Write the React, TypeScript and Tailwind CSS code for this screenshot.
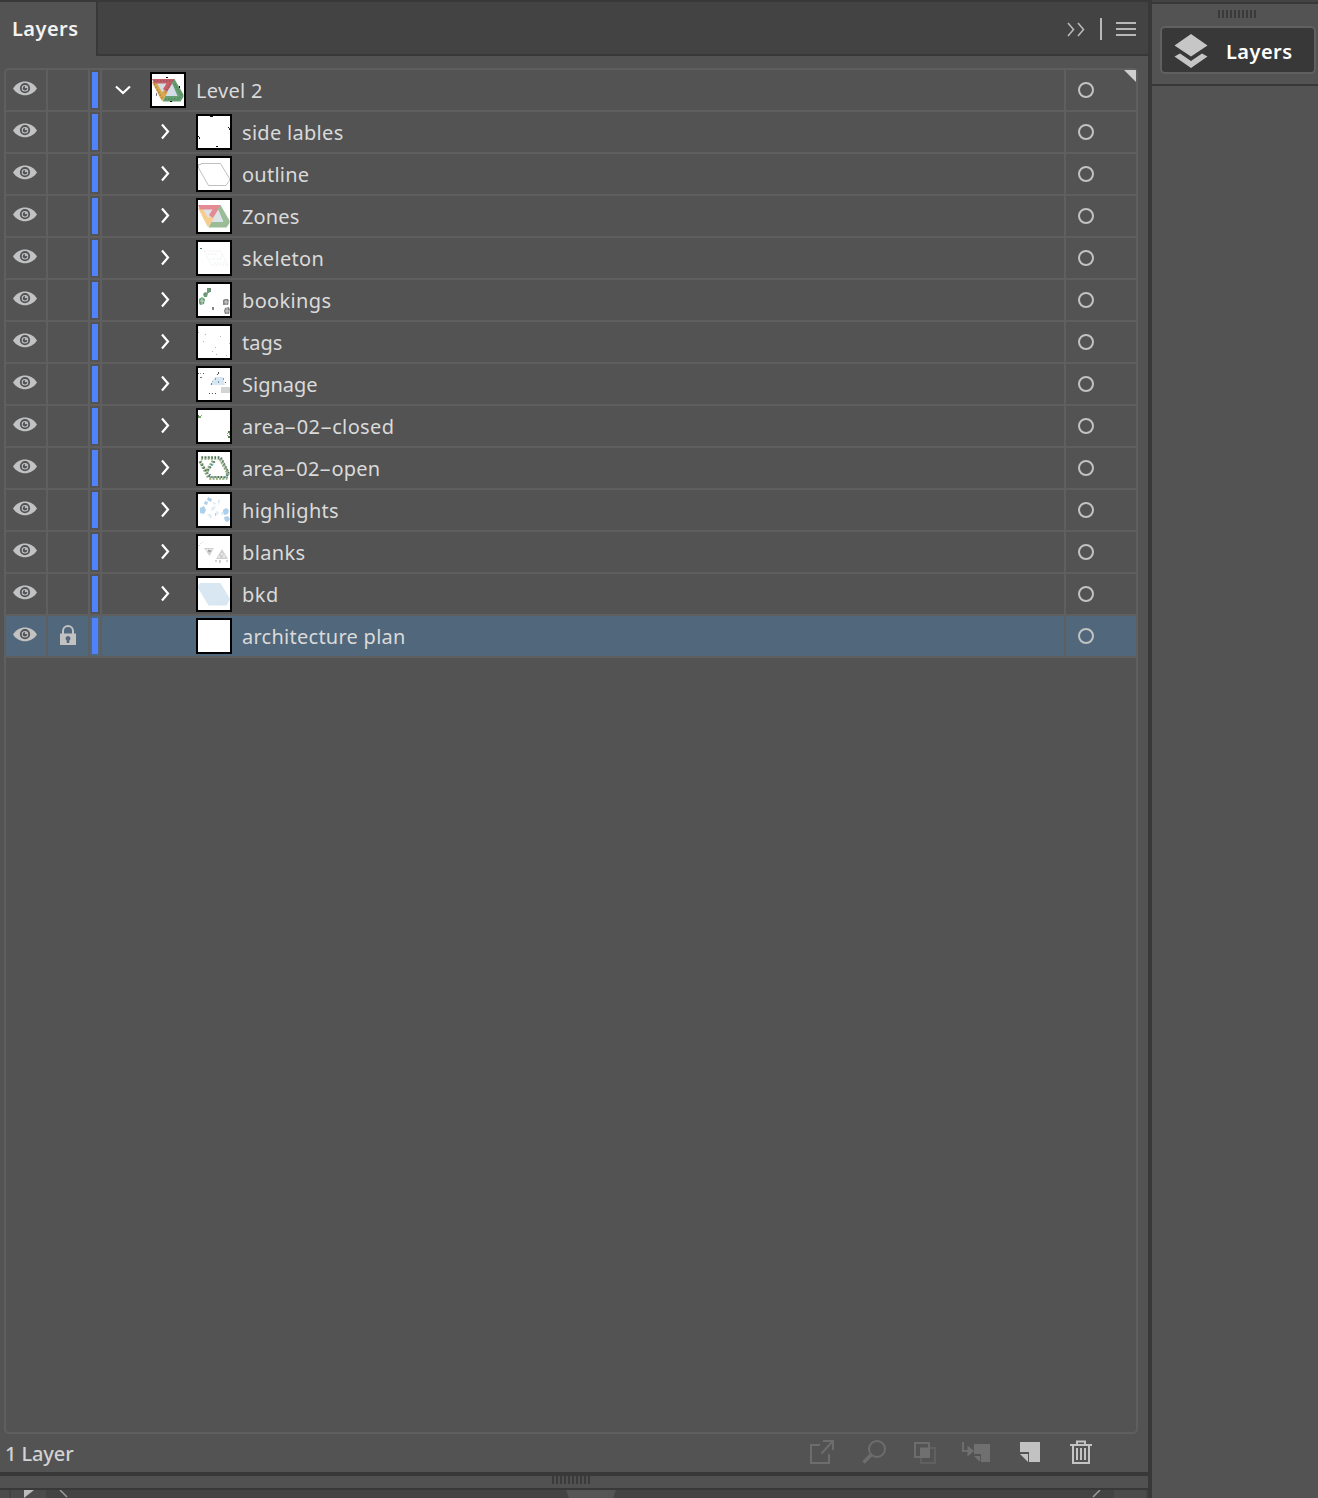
import type { ReactNode } from "react";

function Grip() {
  return (
    <svg width="38" height="8" className="block" fill="#3a3a3a" shapeRendering="crispEdges">
      {Array.from({ length: 10 }, (_, i) => (
        <rect key={i} x={i * 4} y="0" width="2" height="8" />
      ))}
    </svg>
  );
}

/* Small speckles used by the artwork previews: [x, y, w, h, colour] */
type Dot = [number, number, number, number, string];
function Dots({ items }: { items: Dot[] }) {
  return (
    <>
      {items.map(([x, y, w, h, c], i) => (
        <rect key={i} x={x} y={y} width={w} height={h} fill={c} />
      ))}
    </>
  );
}

/* The four coloured zones of the floor plan */
function Zones({ red, orange, green, grey }: { red: string; orange: string; green: string; grey: string }) {
  return (
    <>
      <path d="M4 8H21L27 23H12L9 18Z" fill={grey} />
      <path d="M0 8H4.500L10 18 12.500 16 15.500 18.500 11 26.500H9.500Z" fill={orange} />
      <path d="M0 5H23L15 18 11 15 14.500 9.500H2Z" fill={red} />
      <path d="M22.500 5 31.500 20.500V23L28.500 27.500H10.500L13.500 22H25.500L20 9Z" fill={green} />
    </>
  );
}

const n = "#b4b4b4";

const art: Record<string, ReactNode> = {
  level: (
    <>
      <Zones red="#c85f68" orange="#dba84f" green="#65a072" grey="#d3dde6" />
      <path d="M2 7H22M2 10 10 24M13 25H27L29 21 22 9M13 19 19 9" fill="none" stroke="#4b4b3c" strokeOpacity=".3" strokeWidth="2" strokeDasharray="1.500 1.500" />
      <Dots items={[[14, 3, 2, 1, "#111"], [27, 12, 1, 2, "#111"], [4, 19, 1, 3, "#777"], [18, 27, 2, 1, "#111"]]} />
    </>
  ),
  side: <Dots items={[[12, 0, 3, 1, "#111"], [30, 11, 1, 1, "#111"], [31, 12, 1, 2, "#333"], [0, 20, 1, 1, "#111"], [1, 21, 1, 2, "#333"], [18, 30, 2, 1, "#111"]]} />,
  outline: <path d="M0.500 6.500H3V5.500H22.500L31.500 20.500V22.500L28 27.500H10.500L0.500 10Z" fill="none" stroke="#c0c0c0" />,
  zones: <Zones red="#e38a94" orange="#f6cd8e" green="#9abd98" grey="#dce3e7" />,
  skeleton: (
    <>
      <Dots items={[[2, 6, 2, 1, "#34857e"]]} />
      <path d="M6 9H22L30 23H13ZM10 12H20M12 17H23M16 21H27M25 12 22 18" fill="none" stroke="#edf2f1" strokeDasharray="2 1" />
    </>
  ),
  bookings: (
    <>
      <path d="M9 4h3l1 2-2 3h-2zM5 10l2-2 3 1-1 4H6zM1 15l3-2 3 2-1 5-4 1-1-2zM27 15h3v2h-3zM27 24h4v2h-4zM25 19h2v2h-2z" fill="#67a174" />
      <path d="M11 4h2v4h-2zM7 9h2v2H7zM2 17h2v2H2zM25 16l2-1h3l1 2-1 4h-4l-1-2zM27 24l4-1 1 3-1 4h-4l-1-3zM14 23h2v3h-2z" fill="#858585" />
      <path d="M28 16v5M26 18h5M29 24v6M27 27h5M4 14v6M2 17h4" stroke="#dfeae1" strokeWidth=".7" />
    </>
  ),
  tags: <Dots items={[[0, 6, 1, 1, n], [7, 8, 1, 1, n], [22, 10, 1, 1, n], [5, 15, 1, 1, n], [31, 17, 1, 1, n], [17, 21, 1, 1, n], [14, 25, 1, 1, n], [18, 28, 1, 1, n], [28, 29, 1, 1, n]]} />,
  signage: (
    <>
      <path d="M17 9H25L27 17H12Z" fill="#d6e7f3" />
      <Dots items={[[0, 5, 1, 1, "#555"], [2, 5, 1, 1, "#999"], [5, 5, 1, 1, "#555"], [2, 9, 2, 1, "#678"], [20, 4, 1, 2, "#456"], [19, 6, 1, 1, "#456"], [17, 10, 1, 2, "#8aa4b8"], [14, 13, 1, 1, "#9ab"], [13, 15, 1, 2, "#789"], [20, 13, 1, 2, "#79a"], [25, 10, 1, 2, "#89a"], [27, 14, 1, 1, "#567"], [23, 19, 9, 6, "#d2d3d3"], [11, 25, 1, 1, "#444"], [14, 25, 1, 1, "#555"], [17, 25, 1, 1, "#444"]]} />
    </>
  ),
  closed: <Dots items={[[0, 5, 1, 3, "#5c8a50"], [1, 6, 2, 2, "#7ea575"], [3, 5, 1, 1, "#999"], [30, 21, 2, 2, "#4d8340"], [29, 23, 1, 1, "#999"], [31, 23, 1, 2, "#8a9"], [30, 26, 2, 2, "#4d8340"], [29, 25, 1, 1, "#999"]]} />,
  open: (
    <>
      <path d="M3 6H22L30 21 28 26H11L2 9M9 19 16 8" fill="none" stroke="#8bab84" strokeWidth="3.500" strokeDasharray="2 1.300" />
      <path d="M4 5.500H23L30.500 21 28 25H12L2 10M10 18 17 9" fill="none" stroke="#4b6560" strokeWidth="2" strokeDasharray="1.200 2" />
      <path d="M4 7H13M4 11 10 22M12 27H26M22 9 28 20" stroke="#a5b466" strokeWidth="1" strokeDasharray="1 2" />
      <Dots items={[[11, 22, 2, 1, "#4f9eb8"], [26, 24, 2, 1, "#6bb0c0"], [14, 12, 1, 2, "#6bb0c0"]]} />
    </>
  ),
  highlights: (
    <>
      <path d="m10 3 4 2-1 3-4-2zM7 7l3 1-1 3-3-1zM2 14l4-2 2 4-2 4-4-1zM25 16l3-2 3 2-1 4-4 1-1-3zM26 23l4-1 2 3-2 3-3-1z" fill="#abd0ec" />
      <path d="m15 8 3 1-1 2-2-1zM20 6l2-1v3l-2 3zM14 13l4-1-2 4-3 1zM9 20l4 0 1 4h-2zM18 17l3 1-1 3h-2zM23 18h2v3h-2z" fill="#dfedf7" />
      <rect x="17" y="19" width="1" height="3" fill="#cdc8cc" />
    </>
  ),
  blanks: (
    <>
      <path d="M6 12H16L11.500 20ZM24 13L30 23H18Z" fill="#cfd1d0" />
      <path d="M9 13v2m3-2v3m2-3v1M24 17v2m-3 1v2m5-3v3" stroke="#fff" />
      <Dots items={[[0, 9, 2, 1, "#ddd"], [4, 6, 1, 1, "#ddd"], [2, 7, 1, 1, "#ddd"], [10, 14, 3, 2, "#aaa"], [17, 24, 2, 2, "#d5d5d5"], [21, 24, 2, 3, "#d2d2d2"], [28, 24, 2, 2, "#d8d8d8"]]} />
    </>
  ),
  bkd: <path d="M0 8 2 5H22.500L32 21 28.500 27.500H10.500L0 10Z" fill="#d8e7f1" />,
  plan: null,
};

function Eye() {
  return (
    <svg width="24" height="16" viewBox="0 0 24 16" className="-mt-0.5 block">
      <path d="M0 7.500C5.500-2 18.500-2 24 7.500 18.500 16.500 5.500 16.500 0 7.500Z" fill="#c2c2c2" />
      <circle cx="12" cy="7.200" r="4.200" fill="none" stroke="#505356" strokeWidth="1.800" />
      <circle cx="12" cy="7.200" r="2.200" fill="#505356" />
      <circle cx="12.900" cy="6.200" r="1.100" fill="#c2c2c2" />
    </svg>
  );
}

function Lock() {
  return (
    <svg width="16" height="20" viewBox="0 0 16 20" className="-mt-[3px] block">
      <path d="M3 9V6a5 5 0 0 1 10 0V9" fill="none" stroke="#c2c2c2" strokeWidth="2" />
      <path d="M0 8.500H16V20H0Z" fill="#c2c2c2" />
      <path d="M8 11a2.500 2.500 0 0 1 1.300 4.600V18H6.700V15.600A2.500 2.500 0 0 1 8 11Z" fill="#51677b" />
    </svg>
  );
}

type Layer = { name: string; art: string; kind?: "root" | "locked"; tracking: string };

const layers: Layer[] = [
  { name: "Level 2", art: "level", kind: "root", tracking: "tracking-[0.3px]" },
  { name: "side lables", art: "side", tracking: "tracking-[0.3px]" },
  { name: "outline", art: "outline", tracking: "tracking-[0.25px]" },
  { name: "Zones", art: "zones", tracking: "tracking-[0.15px]" },
  { name: "skeleton", art: "skeleton", tracking: "tracking-[0.3px]" },
  { name: "bookings", art: "bookings", tracking: "tracking-[0.35px]" },
  { name: "tags", art: "tags", tracking: "tracking-[0px]" },
  { name: "Signage", art: "signage", tracking: "tracking-[0px]" },
  { name: "area-02-closed", art: "closed", tracking: "tracking-[0.35px]" },
  { name: "area-02-open", art: "open", tracking: "tracking-[0.25px]" },
  { name: "highlights", art: "highlights", tracking: "tracking-[0.3px]" },
  { name: "blanks", art: "blanks", tracking: "tracking-[0.38px]" },
  { name: "bkd", art: "bkd", tracking: "tracking-[0.55px]" },
  { name: "architecture plan", art: "plan", kind: "locked", tracking: "tracking-[0.26px]" },
];

/* Layer names use a wide hyphen */
function Name({ text }: { text: string }) {
  return (
    <>
      {text.split(/(-)/).map((part, i) =>
        part === "-" ? (
          <span key={i} className="mx-[2.5px] inline-block scale-x-[1.9]">
            -
          </span>
        ) : (
          part
        ),
      )}
    </>
  );
}

function Row({ layer }: { layer: Layer }) {
  const root = layer.kind === "root";
  const locked = layer.kind === "locked";
  return (
    <div className={`flex h-[42px] shrink-0 border-b-2 border-[#5f5f5f] ${locked ? "bg-[#51677b]" : ""}`}>
      <div className="flex w-[42px] items-center border-r-2 border-[#5f5f5f] pl-[7px]">
        <Eye />
      </div>
      <div className="flex w-[42px] items-center border-r-2 border-[#5f5f5f] pl-3">{locked && <Lock />}</div>
      <div className="flex w-3 items-center border-r-2 border-[#5f5f5f] pl-0.5">
        <div className="h-9 w-1.5 bg-[#5082fc]" />
      </div>
      <div className={`flex flex-1 items-center ${root ? "pl-3" : "pl-[54px]"}`}>
        <svg width="18" height="18" viewBox="0 0 18 18" className="-mt-[3px] block" fill="none" stroke="#fff" strokeWidth="2.200">
          {root ? <path d="M2 6.500 9 13 16 6.500" /> : !locked && <path d="M6 2.500 12 9.500 6 16.500" />}
        </svg>
        <div className={`size-9 border-2 border-black bg-white ${root ? "ml-[18px]" : "ml-[22px]"}`}>
          <svg width="32" height="32" viewBox="0 0 32 32" className="block">
            {art[layer.art]}
          </svg>
        </div>
        <span className={`ml-2.5 mt-0.5 whitespace-pre text-[20px] leading-7 text-[#dadada] ${layer.tracking}`}>
          <Name text={layer.name} />
        </span>
      </div>
      <div className="flex w-[72px] items-center border-l-2 border-[#5f5f5f] pl-3">
        <div className="size-4 rounded-full border-2 border-[#c2c2c2]" />
      </div>
    </div>
  );
}

function Footer() {
  return (
    <div className="flex h-[38px] items-center pl-[5px] text-[20px] text-[#d2d2d2]">
      <span className="mt-0.5 flex-1 font-medium tracking-[-0.1px]">1 Layer</span>
      <svg width="290" height="28" viewBox="808 1438 290 28" className="mr-[50px] -mt-0.5 block" fill="none">
        <g stroke="#6d6d6d" strokeWidth="2">
          <path d="M820 1445H811V1463H829V1454M823 1441H833V1450M832.500 1441.500 821.500 1453.500" />
          <circle cx="877" cy="1449" r="8" />
          <path d="M871 1455 863.500 1462.500" strokeWidth="3.500" />
          <path d="M921 1448H935V1463H921Z" stroke="#606060" />
          <path d="M915 1443H929V1457H915Z" />
          <path d="M920 1448H930V1458H920Z" fill="#707070" stroke="none" />
          <path d="M963 1442V1451H970" />
        </g>
        <path d="M967.500 1445.500 974 1451 967.500 1456.500ZM974 1444H990V1462H981V1454H974ZM974 1456H980V1462Z" fill="#707070" />
        <path d="M1020 1442H1040V1462H1029V1452H1020ZM1020 1454H1028V1462Z" fill="#c2c2c2" />
        <path
          d="M1070 1445H1092M1077 1444V1441.500H1085V1444M1073 1446V1463H1089V1446M1077 1448V1460M1081 1448V1460M1085 1448V1460"
          stroke="#c4c4c4"
          strokeWidth="2"
        />
      </svg>
    </div>
  );
}

export default function App() {
  return (
    <div className="flex h-[1498px] w-[1318px] overflow-hidden bg-[#535353] font-['Noto_Sans','Open_Sans',sans-serif]">
      <main className="flex w-[1148px] flex-col border-t-2 border-[#383838]">
        <header className="flex h-[54px]">
          <div className="flex w-[98px] items-center border-r-2 border-[#383838] pl-3 text-[20px] font-semibold tracking-[0.45px] text-[#f2f2f2]">
            Layers
          </div>
          <div className="flex flex-1 items-center justify-end border-b-2 border-[#383838] bg-[#434343] pr-3 pt-0.5">
            <svg width="72" height="24" viewBox="0 0 72 24" className="block" fill="none" stroke="#b8b8b8">
              <path d="M4 6 9.500 12.500 4 19M14 6 19.500 12.500 14 19" strokeWidth="1.600" />
              <path d="M37 1V23" strokeWidth="2" />
              <path d="M52 6H72M52 12H72M52 18H72" strokeWidth="2" />
            </svg>
          </div>
        </header>
        <section className="relative ml-1 mt-3 flex h-[1366px] w-[1134px] flex-col rounded-[5px] border-2 border-[#5f5f5f]">
          {layers.map((layer) => (
            <Row key={layer.name} layer={layer} />
          ))}
          <svg width="12" height="12" className="absolute right-0 top-0" fill="#cfcfcf">
            <path d="M0 0H12V12Z" />
          </svg>
        </section>
        <Footer />
        <div className="flex h-[18px] shrink-0 justify-center border-b-2 border-t-4 border-[#383838] bg-[#515151] pr-1.5">
          <Grip />
        </div>
        <svg width="1148" height="8" className="block shrink-0 bg-[#434343]">
          <path d="M0 0H9V8H0ZM11 0H46V8H11ZM1114 0H1146V8H1114Z" fill="#4b4b4b" />
          <path d="M24 0H34L24 8Z" fill="#bdbdbd" />
          <path d="M60 0 67 7M1100 0 1093 7" stroke="#999" strokeWidth="1.600" />
          <path d="M566 0H616L613 8H569Z" fill="#555" />
        </svg>
      </main>
      <aside className="flex w-[170px] flex-col border-l-4 border-[#383838]">
        <div className="h-1 border-b-2 border-[#383838] bg-[#444]" />
        <div className="flex h-[82px] flex-col items-center border-b-2 border-[#383838] pt-1.5">
          <div className="ml-1">
            <Grip />
          </div>
          <button className="ml-1.5 mt-2 flex h-12 w-[156px] items-center rounded-[5px] border-2 border-[#606060] bg-[#383838] pl-3 pt-0.5 text-[20px] font-semibold tracking-[0.45px] text-white">
            <svg width="34" height="36" viewBox="0 0 34 36" className="mr-[18px] block" fill="#c6c6c6">
              <path d="M17 1 33.500 12.500 17 23.500 .5 12.500ZM.5 23.500 6 20.500 17 28 28 20.500 33.500 23.500 17 35Z" />
            </svg>
            <span className="mt-0.5">Layers</span>
          </button>
        </div>
      </aside>
    </div>
  );
}
